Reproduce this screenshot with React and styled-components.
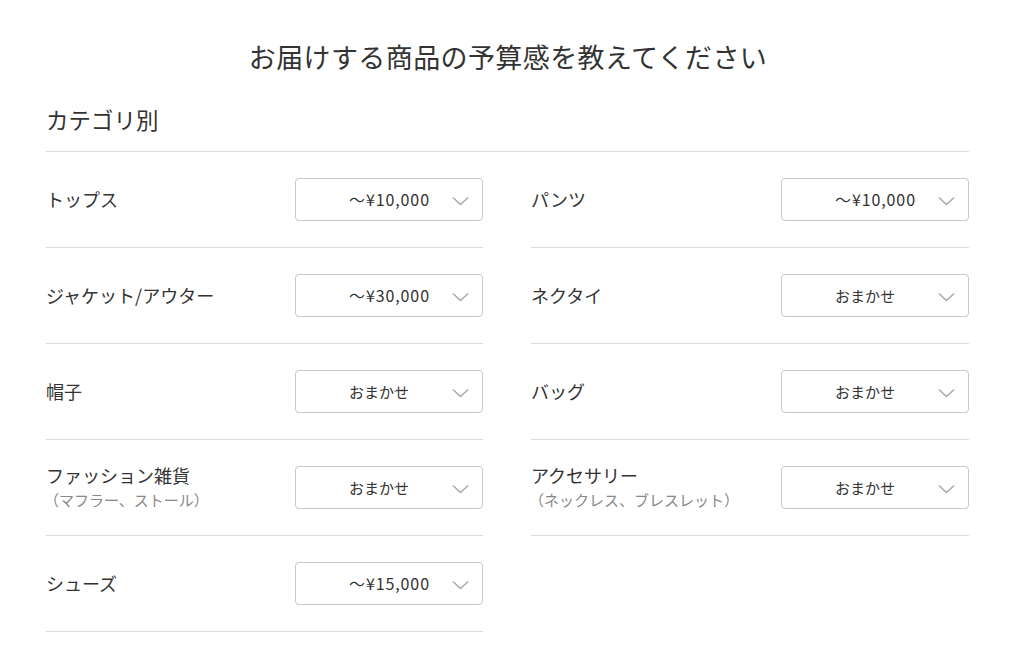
import React from "react";
import styled, { createGlobalStyle } from "styled-components";

const Global = createGlobalStyle`
  html, body { margin: 0; padding: 0; background: #fff; }
  body {
    font-family: "Noto Sans CJK JP", "Noto Sans", sans-serif;
    color: #333;
  }
`;

const Page = styled.div`
  width: 1024px;
  box-sizing: border-box;
  padding: 37px 55px 0 46px;
`;

const Title = styled.h1`
  margin: 0;
  font-size: 27px;
  font-weight: 400;
  letter-spacing: 0.4px;
  line-height: 40px;
  text-align: center;
  padding-left: 1px;
  color: #333;
`;

const Heading = styled.h2`
  margin: 27px 0 0;
  padding-bottom: 17px;
  font-size: 22.5px;
  font-weight: 400;
  line-height: 30px;
  border-bottom: 1px solid #dcdcdc;
  color: #333;
`;

const Grid = styled.div`
  display: grid;
  grid-template-columns: 437px 438px;
  column-gap: 48px;
  align-items: start;
`;

const Column = styled.div`
  display: flex;
  flex-direction: column;
`;

const Row = styled.div`
  height: 95px;
  display: flex;
  align-items: center;
  justify-content: space-between;
  border-bottom: 1px solid #dcdcdc;
`;

const LabelBox = styled.div`
  display: flex;
  flex-direction: column;
  margin-top: -2px;
`;

const Label = styled.span`
  font-size: 18px;
  line-height: 26px;
  color: #333;
`;

const Sub = styled.span`
  font-size: 15px;
  line-height: 24px;
  color: #888;
  margin-left: -2px;
`;

const Select = styled.div`
  position: relative;
  width: 188px;
  height: 43px;
  box-sizing: border-box;
  border: 1px solid #c8c8c8;
  border-radius: 4px;
  display: flex;
  align-items: center;
  padding-left: 53px;
  padding-bottom: 1px;
  font-size: ${(p) => (p.$small ? "15px" : "16px")};
  letter-spacing: ${(p) => (p.$small ? "0" : "0.9px")};
  color: #333;
  background: #fff;
`;

const Chevron = styled.svg`
  position: absolute;
  right: 13px;
  top: 50%;
  margin-top: -4px;
`;

const ChevronIcon = () => (
  <Chevron width="17" height="10" viewBox="0 0 17 10">
    <path d="M1 1.5 L8.5 8.5 L16 1.5" fill="none" stroke="#a8a8a8" strokeWidth="1.4" />
  </Chevron>
);

const left = [
  { label: "トップス", value: "〜¥10,000" },
  { label: "ジャケット/アウター", value: "〜¥30,000" },
  { label: "帽子", value: "おまかせ" },
  { label: "ファッション雑貨", sub: "（マフラー、ストール）", value: "おまかせ" },
  { label: "シューズ", value: "〜¥15,000" },
];

const right = [
  { label: "パンツ", value: "〜¥10,000" },
  { label: "ネクタイ", value: "おまかせ" },
  { label: "バッグ", value: "おまかせ" },
  { label: "アクセサリー", sub: "（ネックレス、ブレスレット）", value: "おまかせ" },
];

const Item = ({ label, sub, value }) => (
  <Row>
    <LabelBox>
      <Label>{label}</Label>
      {sub && <Sub>{sub}</Sub>}
    </LabelBox>
    <Select $small={value === "おまかせ"}>
      {value}
      <ChevronIcon />
    </Select>
  </Row>
);

export default function App() {
  return (
    <>
      <Global />
      <Page>
        <Title>お届けする商品の予算感を教えてください</Title>
        <Heading>カテゴリ別</Heading>
        <Grid>
          <Column>
            {left.map((it) => (
              <Item key={it.label} {...it} />
            ))}
          </Column>
          <Column>
            {right.map((it) => (
              <Item key={it.label} {...it} />
            ))}
          </Column>
        </Grid>
      </Page>
    </>
  );
}
